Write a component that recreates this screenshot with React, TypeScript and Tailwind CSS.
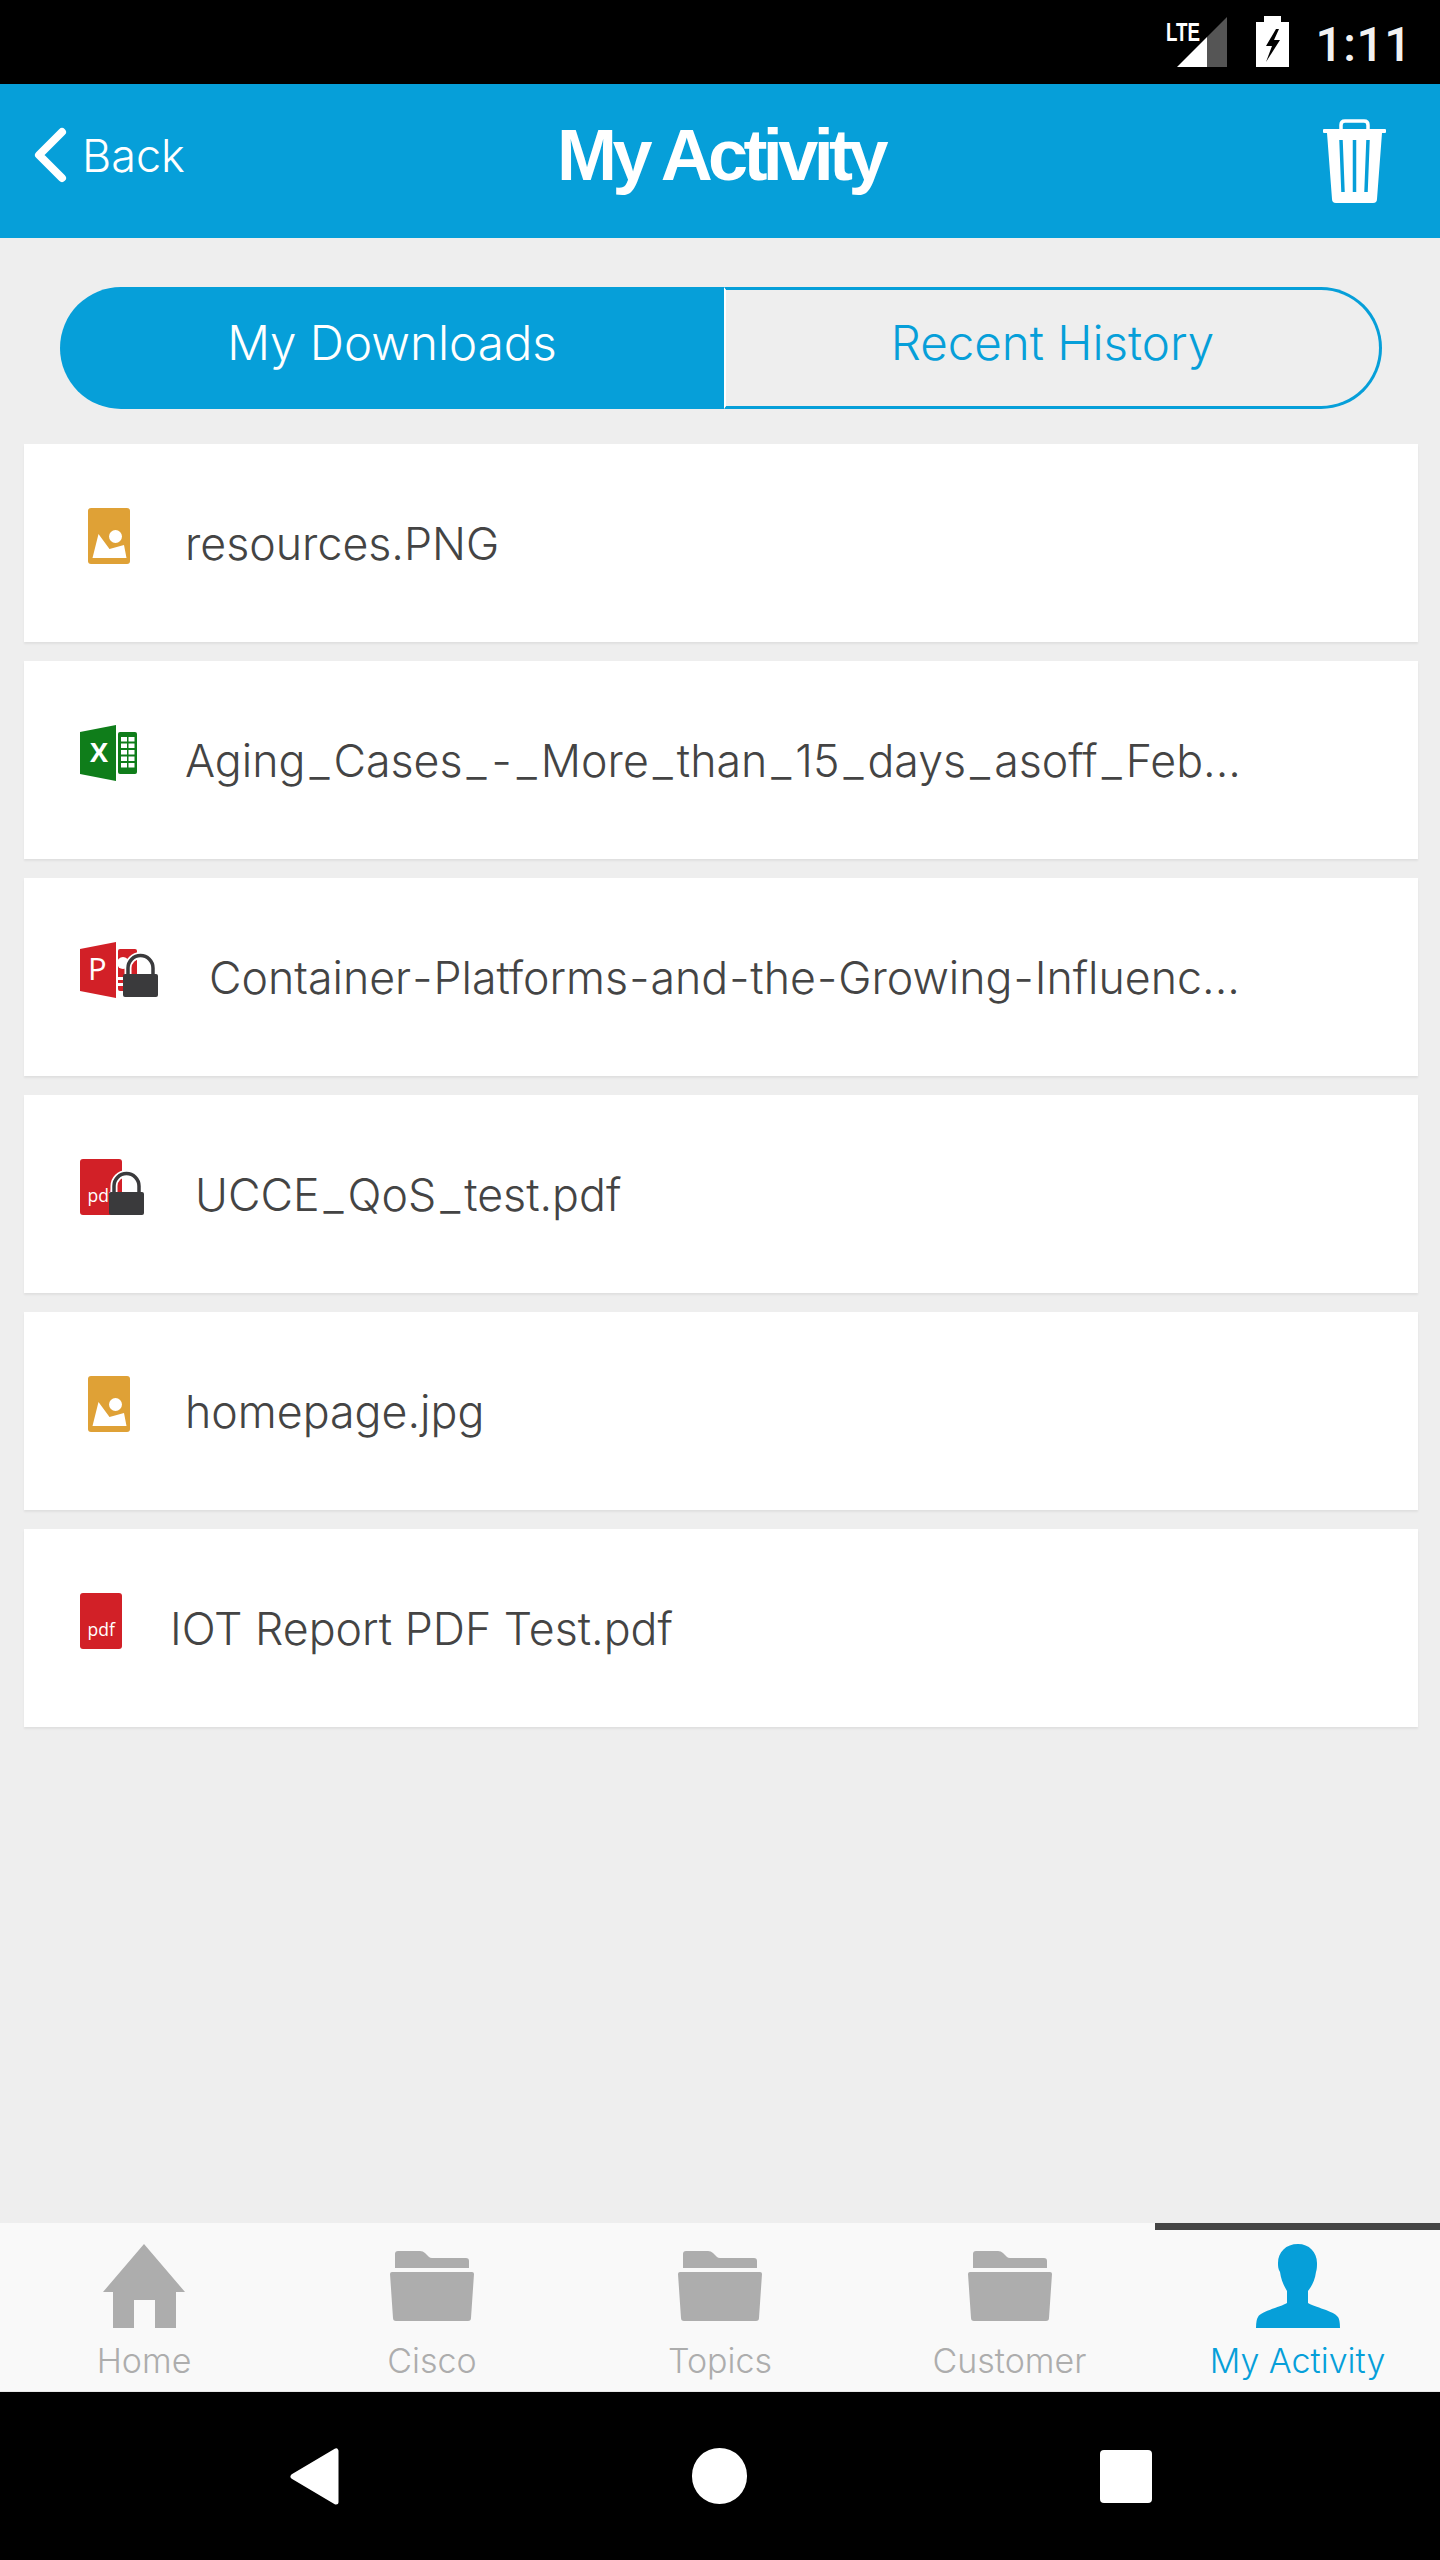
import * as React from "react";

const sans = "font-['Inter','Noto_Sans',sans-serif]";

const Lock = ({ x, y }: { x: number; y: number }) => (
    <g transform={`translate(${x} ${y})`}>
        <path d="M5 20 V13 a12.5 12.5 0 0 1 25 0 V20" fill="none" stroke="#fff" strokeWidth="7" />
        <path d="M5 20 V13 a12.5 12.5 0 0 1 25 0 V20" fill="none" stroke="#3a3a3c" strokeWidth="3.5" />
        <rect x="0" y="19" width="35" height="23" rx="2" fill="#3a3a3c" />
    </g>
);

const ImageIcon = () => (
    <svg width="42" height="56" viewBox="0 0 42 56" className="ml-2">
        <rect width="42" height="56" rx="3" fill="#dfa136" />
        <path d="M4.5 50 L10.5 26 L21.5 41 L36 37 L38.5 50 Z" fill="#fff" />
        <circle cx="27.5" cy="28.5" r="8.5" fill="#dfa136" />
        <circle cx="27.5" cy="28.5" r="6.5" fill="#fff" />
    </svg>
);

const ExcelIcon = () => (
    <svg width="57" height="56" viewBox="0 0 57 56">
        <path d="M0 7 L36 0 V56 L0 49 Z" fill="#0f7d1a" />
        <text x="10" y="37" fontSize="27" fontWeight="700" fill="#fff" fontFamily="Open Sans">X</text>
        <rect x="38" y="7" width="19" height="42" rx="2" fill="#0f7d1a" />
        {[12, 18.5, 25, 31.5, 38].map((y) => (
            <g key={y} fill="#fff">
                <rect x="41" y={y} width="6" height="4.5" />
                <rect x="48.5" y={y} width="6" height="4.5" />
            </g>
        ))}
    </svg>
);

const PptIcon = () => (
    <svg width="78" height="56" viewBox="0 0 78 56">
        <path d="M0 7 L36 0 V56 L0 49 Z" fill="#d22027" />
        <rect x="38" y="7" width="19" height="42" rx="2" fill="#d22027" />
        <text x="8" y="38" fontSize="31" fontWeight="500" fill="#fff" fontFamily="Open Sans">P</text>
        <circle cx="43" cy="21" r="6" fill="#fff" />
        <rect x="38" y="35" width="8" height="3" fill="#fff" />
        <rect x="38" y="41" width="8" height="3" fill="#fff" />
        <Lock x={43} y={13} />
    </svg>
);

const PdfIcon = ({ locked }: { locked?: boolean }) => (
    <svg width={locked ? 64 : 42} height="56" viewBox={locked ? "0 0 64 56" : "0 0 42 56"}>
        <rect width="42" height="56" rx="3" fill="#d22027" />
        <text x="7.5" y="43" fontSize="17.5" fill="#fff" fontFamily="Open Sans">pdf</text>
        {locked && <Lock x={29} y={14} />}
    </svg>
);

const files = [
    { name: "resources.PNG", icon: <ImageIcon />, box: "w-[105px]" },
    { name: "Aging_Cases_-_More_than_15_days_asoff_Feb...", icon: <ExcelIcon />, box: "w-[105px]" },
    { name: "Container-Platforms-and-the-Growing-Influenc...", icon: <PptIcon />, box: "w-[129px]" },
    { name: "UCCE_QoS_test.pdf", icon: <PdfIcon locked />, box: "w-[115px]" },
    { name: "homepage.jpg", icon: <ImageIcon />, box: "w-[105px]" },
    { name: "IOT Report PDF Test.pdf", icon: <PdfIcon />, box: "w-[90px]" },
];

// the reference font has much wider _ and - than Inter
const FileName = ({ name }: { name: string }) => (
    <span className="whitespace-nowrap pt-[3px] text-[44.7px] font-light text-[#444444]">
        {name.split(/([_-])/).map((part, i) =>
            part === "_" ? (
                <span key={i} className="px-[4px]">_</span>
            ) : part === "-" ? (
                <span key={i} className="px-[1px]">-</span>
            ) : (
                part
            )
        )}
    </span>
);

const Folder = () => (
    <svg width="84" height="70" viewBox="0 0 84 70" fill="#adadad">
        <path d="M5 17 V3 Q5 0 8 0 H30 Q33 0 35 2 L39 6 Q40 7 42 7 H76 Q79 7 79 10 V17 Z" />
        <path d="M2 21 H82 Q84 21 84 23 L81 67 Q81 70 78 70 H6 Q3 70 3 67 L0 23 Q0 21 2 21 Z" />
    </svg>
);

const Home = () => (
    <svg width="82" height="84" viewBox="0 0 82 84" fill="#adadad">
        <path d="M41 0 L82 48 H73 V84 H52 V56 H31 V84 H10 V48 H0 Z" />
    </svg>
);

const Person = () => (
    <svg width="84" height="84" viewBox="0 0 84 84" fill="#069fd9">
        <path d="M42 0 C30 0 22 8 22 19 C22 22 22 25 24 28 C25 36 28 42 31 47 L31 59 C25 63 5 67 2 73 Q0 76 0 84 H84 Q84 76 82 73 C78 67 58 63 52 59 L52 47 C56 42 59 36 60 28 C61 25 61 22 61 19 C61 8 53 0 42 0 Z" />
    </svg>
);

const tabs = [
    { label: "Home", icon: <Home />, cls: "" },
    { label: "Cisco", icon: <Folder />, cls: "" },
    { label: "Topics", icon: <Folder />, cls: "" },
    { label: "Customer", icon: <Folder />, cls: "pl-[3px]" },
    { label: "My Activity", icon: <Person />, cls: "pl-[3px]", active: true },
];

export default function App() {
    return (
        <div className={`flex h-[2560px] w-[1440px] flex-col bg-[#eeeeee] ${sans}`}>
            {/* Status bar */}
            <div className="flex h-[84px] shrink-0 items-start justify-end bg-black pr-[28px]">
                <div className="relative mt-[17px] h-[50px] w-[50px]">
                    <span className="absolute -left-[11px] top-[2px] origin-left scale-x-[0.72] font-['Liberation_Sans',sans-serif] text-[26px] font-bold leading-[26px] text-white">
                        LTE
                    </span>
                    <svg width="50" height="50" viewBox="0 0 50 50">
                        <path d="M0 50 L30 20 V50 Z" fill="#fff" />
                        <path d="M30 20 L50 0 V50 H30 Z" fill="#555" />
                    </svg>
                </div>
                <svg width="33" height="51" viewBox="0 0 33 51" className="ml-[29px] mt-[16px]">
                    <path d="M8 0 H25 V6 H33 V51 H0 V6 H8 Z" fill="#fff" />
                    <path d="M20 13 L10 30 H16 L10 46 L24 24 H18 L23 13 Z" fill="#000" />
                </svg>
                <span className="ml-[27px] mt-[17px] font-['Roboto',sans-serif] text-[48px] font-medium leading-[56px] tracking-[0.5px] text-[#f2f2f2]">
                    1:11
                </span>
            </div>

            {/* Header */}
            <div className="flex h-[154px] shrink-0 items-center bg-[#069fd9] text-white">
                <div className="flex flex-1 items-center pb-[12px] pl-[33px]">
                    <svg width="34" height="56" viewBox="0 0 34 56" fill="none" stroke="#fff" strokeWidth="8" strokeLinecap="round" strokeLinejoin="round">
                        <polyline points="29,5 6,28 29,51" />
                    </svg>
                    <span className="ml-[15px] text-[45px] font-light leading-none">Back</span>
                </div>
                <h1 className="ml-[22px] pb-[12px] font-['Liberation_Sans',sans-serif] text-[72px] font-bold leading-none tracking-[-4.6px]">
                    My Activity
                </h1>
                <div className="flex flex-1 justify-end pr-[54px]">
                    <svg width="63" height="85" viewBox="0 0 63 85">
                        <path d="M18 11 V6 Q18 2 22 2 H41 Q45 2 45 6 V11" fill="none" stroke="#fff" strokeWidth="3.5" />
                        <rect x="0" y="10" width="63" height="4" rx="1" fill="#fff" />
                        <path d="M4 14 H59 L54 80 Q54 84 50 84 H13 Q9 84 9 80 Z" fill="#fff" />
                        <path d="M18 21 L20 73 M31.5 21 V73 M45 21 L43 73" stroke="#069fd9" strokeWidth="3.5" />
                    </svg>
                </div>
            </div>

            {/* Main */}
            <div className="flex-1">
                <div className="ml-[60px] mt-[49px] flex h-[122px] w-[1322px] text-[47.5px] font-light">
                    <div className="flex w-[664px] items-center justify-center rounded-l-[61px] bg-[#069fd9] pb-[10px] text-white">
                        My Downloads
                    </div>
                    <div className="flex flex-1 items-center justify-center rounded-r-[61px] border-y-[3px] border-r-[3px] border-l-[2px] border-[#069fd9] border-l-white pb-[10px] text-[#069fd9]">
                        Recent History
                    </div>
                </div>

                <div className="mt-[35px] flex flex-col gap-[19px] pl-[24px] pr-[22px]">
                    {files.map((f) => (
                        <div key={f.name} className="flex h-[198px] items-center bg-white pl-[56px] shadow-[0_2px_2px_rgba(0,0,0,0.06)]">
                            <div className={`${f.box} shrink-0 pb-[14px]`}>{f.icon}</div>
                            <FileName name={f.name} />
                        </div>
                    ))}
                </div>
            </div>

            {/* Tab bar */}
            <div className="relative grid h-[169px] shrink-0 grid-cols-5 border-b-[1px] border-[#e8e8e8] bg-[#f9f9f9]">
                <div className="absolute right-0 top-0 h-[7px] w-[285px] bg-[#444444]" />
                {tabs.map((t) => (
                    <div key={t.label} className={`flex flex-col items-center pt-[21px] ${t.cls}`}>
                        <div className="flex h-[84px] items-center">{t.icon}</div>
                        <span className={`mt-[11px] text-[34px] font-light leading-[44px] ${t.active ? "text-[#069fd9]" : "text-[#adadad]"}`}>
                            {t.label}
                        </span>
                    </div>
                ))}
            </div>

            {/* Android nav */}
            <div className="flex h-[168px] shrink-0 items-center justify-center gap-[353px] bg-black pl-[1px]">
                <svg width="49" height="57" viewBox="0 0 49 57">
                    <path d="M46 3 V54 L3 28.5 Z" fill="#fff" stroke="#fff" strokeWidth="5" strokeLinejoin="round" />
                </svg>
                <div className="h-[56px] w-[55px] rounded-full bg-white" />
                <div className="h-[53px] w-[52px] rounded-[4px] bg-white" />
            </div>
        </div>
    );
}
